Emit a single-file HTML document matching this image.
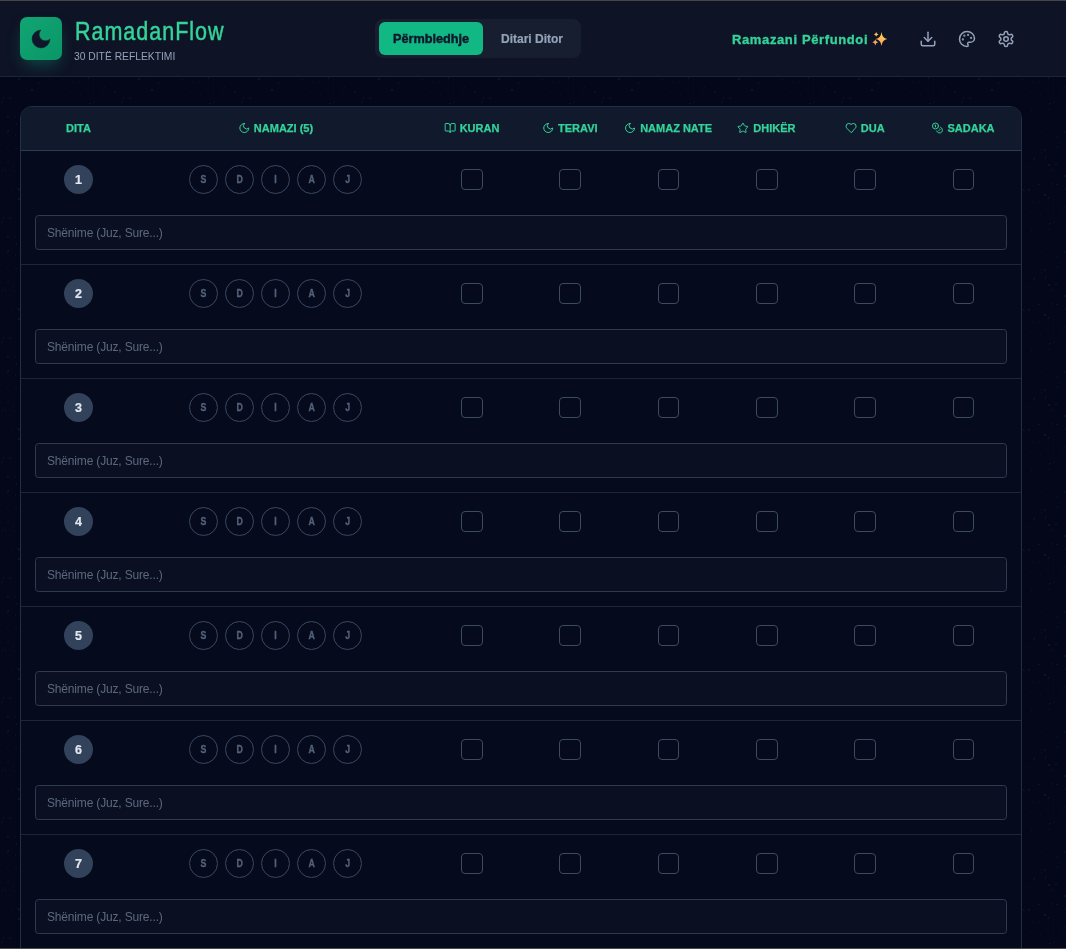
<!DOCTYPE html><html><head><meta charset="utf-8"><title>RamadanFlow</title><style>
*{box-sizing:border-box;margin:0;padding:0}
html,body{width:1066px;height:949px;overflow:hidden;background:#030719;font-family:"Liberation Sans",sans-serif}
#root{position:absolute;left:0;top:0;width:1066px;height:949px;will-change:transform}
.abs{position:absolute}
#topline{left:0;top:0;width:1066px;height:1px;background:#47454b}
#botline{left:0;top:948px;width:1066px;height:1px;background:#4d4c49}
#hdr{left:0;top:1px;width:1066px;height:76px;background:#0e1326;border-bottom:1px solid #1c2638}
#logo{left:20px;top:17px;width:42px;height:43px;border-radius:7px;background:linear-gradient(135deg,#11a572,#0a9667);box-shadow:0 8px 16px -4px rgba(16,185,129,.35);display:flex;align-items:center;justify-content:center}
#title{left:75px;top:16px;font-size:25px;letter-spacing:1.15px;transform:scaleX(.86);transform-origin:0 0;-webkit-text-stroke:.5px #34d399;color:#34d399;line-height:30px;white-space:nowrap}
#sub{left:74px;top:51px;font-size:10.3px;color:#94a3b8;line-height:12px;white-space:nowrap}
#tabs{left:375px;top:19px;width:206px;height:39px;border-radius:8px;background:#161e30}
#tab1{left:4px;top:3px;width:104px;height:33px;border-radius:6px;background:#12b884;color:#0f172a;font-weight:bold;font-size:12.7px;-webkit-text-stroke:.45px #0f172a;display:flex;align-items:center;justify-content:center}
#tab2{left:108px;top:3px;width:98px;height:33px;color:#94a3b8;font-weight:bold;font-size:12px;-webkit-text-stroke:.2px #94a3b8;display:flex;align-items:center;justify-content:center}
#done{left:732px;top:32px;-webkit-text-stroke:.35px #34d399;font-size:13px;font-weight:bold;letter-spacing:.62px;color:#34d399;white-space:nowrap;line-height:16px}
.ico{color:#94a3b8}
#card{left:20px;top:106px;width:1002px;height:900px;border:1px solid #232f42;border-radius:12px;background:#050a1d;overflow:hidden}
#thead{left:0;top:0;width:1000px;height:44px;background:#111a2d;border-bottom:1px solid #2e3c53}
.th{top:-1px;height:43px;-webkit-text-stroke:.25px #34d399;display:flex;align-items:center;justify-content:center;gap:4px;color:#34d399;font-weight:bold;font-size:11px;white-space:nowrap;transform:translateX(-50%)}
.row{left:0;width:1000px;height:114px;border-bottom:1px solid #1c2637}
.day{width:29px;height:29px;border-radius:50%;background:#32425a;color:#e2e8f0;font-weight:bold;font-size:12.5px;-webkit-text-stroke:.2px #e2e8f0;display:flex;align-items:center;justify-content:center}
.pr{width:29px;height:29px;border-radius:50%;border:1px solid #3b4a62;color:#53627a;font-weight:bold;font-size:10px;-webkit-text-stroke:.3px #53627a;display:flex;align-items:center;justify-content:center}
.pr i{font-style:normal;display:inline-block;transform:scaleX(.88)}
.cb{width:22px;height:21px;border-radius:4px;border:1.5px solid #3d4b61}
.note{left:14px;top:64px;width:972px;height:35px;border:1px solid #2d3a50;border-radius:3.5px;background:#0a1022;color:#5b687c;font-size:12px;letter-spacing:-.17px;padding-left:11px;display:flex;align-items:center}
</style></head><body><div id="root"><svg class="abs" style="left:0;top:0" width="1066" height="949"><defs><pattern id="st" width="120" height="120" patternUnits="userSpaceOnUse"><g fill="#121a30"><rect x="41" y="19" width="1" height="1" opacity="0.3"/><rect x="105" y="68" width="1" height="2" opacity="0.6"/><rect x="7" y="116" width="2" height="1" opacity="0.3"/><rect x="11" y="55" width="1" height="1" opacity="0.3"/><rect x="11" y="70" width="1" height="1" opacity="0.6"/><rect x="15" y="28" width="2" height="1" opacity="0.6"/><rect x="74" y="50" width="1" height="1" opacity="0.3"/><rect x="71" y="109" width="1" height="2" opacity="0.45"/><rect x="18" y="69" width="1" height="2" opacity="0.6"/><rect x="104" y="87" width="1" height="1" opacity="0.6"/><rect x="73" y="81" width="1" height="2" opacity="0.3"/><rect x="70" y="91" width="1" height="1" opacity="0.6"/><rect x="26" y="63" width="2" height="2" opacity="0.45"/><rect x="59" y="74" width="1" height="2" opacity="0.45"/><rect x="31" y="101" width="1" height="1" opacity="0.3"/><rect x="73" y="38" width="2" height="2" opacity="0.45"/><rect x="93" y="57" width="1" height="1" opacity="0.3"/><rect x="65" y="53" width="1" height="2" opacity="0.3"/><rect x="119" y="62" width="1" height="1" opacity="0.6"/><rect x="9" y="97" width="2" height="2" opacity="0.45"/><rect x="88" y="44" width="2" height="2" opacity="0.6"/><rect x="102" y="58" width="1" height="1" opacity="0.45"/><rect x="60" y="89" width="2" height="1" opacity="0.3"/><rect x="93" y="89" width="1" height="2" opacity="0.45"/><rect x="91" y="49" width="2" height="2" opacity="0.3"/><rect x="59" y="45" width="1" height="1" opacity="0.45"/><rect x="7" y="27" width="1" height="1" opacity="0.6"/><rect x="31" y="50" width="1" height="2" opacity="0.3"/><rect x="21" y="57" width="1" height="2" opacity="0.3"/><rect x="104" y="55" width="2" height="2" opacity="0.6"/><rect x="53" y="45" width="2" height="2" opacity="0.3"/><rect x="19" y="10" width="1" height="1" opacity="0.3"/><rect x="84" y="29" width="1" height="2" opacity="0.6"/><rect x="23" y="33" width="1" height="1" opacity="0.3"/><rect x="53" y="68" width="1" height="2" opacity="0.3"/><rect x="88" y="109" width="2" height="1" opacity="0.45"/><rect x="115" y="111" width="2" height="2" opacity="0.45"/><rect x="51" y="50" width="1" height="2" opacity="0.6"/><rect x="51" y="7" width="1" height="1" opacity="0.3"/><rect x="56" y="20" width="1" height="2" opacity="0.6"/><rect x="6" y="13" width="1" height="1" opacity="0.6"/><rect x="12" y="46" width="2" height="1" opacity="0.3"/><rect x="111" y="26" width="2" height="2" opacity="0.3"/><rect x="81" y="32" width="1" height="2" opacity="0.45"/><rect x="15" y="14" width="1" height="2" opacity="0.45"/><rect x="61" y="39" width="1" height="1" opacity="0.3"/><rect x="95" y="43" width="2" height="2" opacity="0.45"/><rect x="106" y="88" width="1" height="1" opacity="0.3"/><rect x="67" y="46" width="1" height="1" opacity="0.6"/><rect x="38" y="82" width="1" height="2" opacity="0.6"/><rect x="46" y="116" width="1" height="2" opacity="0.3"/><rect x="68" y="69" width="2" height="2" opacity="0.6"/><rect x="28" y="78" width="1" height="1" opacity="0.45"/><rect x="94" y="102" width="1" height="1" opacity="0.6"/><rect x="63" y="45" width="2" height="1" opacity="0.3"/><rect x="101" y="35" width="1" height="2" opacity="0.3"/><rect x="88" y="77" width="1" height="2" opacity="0.6"/><rect x="44" y="46" width="1" height="1" opacity="0.3"/><rect x="29" y="60" width="1" height="2" opacity="0.3"/><rect x="61" y="79" width="2" height="1" opacity="0.45"/><rect x="116" y="83" width="1" height="1" opacity="0.6"/><rect x="15" y="116" width="1" height="1" opacity="0.45"/><rect x="113" y="22" width="1" height="2" opacity="0.3"/><rect x="102" y="92" width="1" height="2" opacity="0.45"/><rect x="95" y="10" width="2" height="1" opacity="0.3"/><rect x="16" y="3" width="1" height="2" opacity="0.6"/><rect x="18" y="78" width="2" height="2" opacity="0.6"/><rect x="119" y="44" width="1" height="1" opacity="0.3"/><rect x="1" y="102" width="2" height="1" opacity="0.6"/><rect x="95" y="119" width="1" height="2" opacity="0.3"/><rect x="105" y="111" width="1" height="1" opacity="0.45"/><rect x="27" y="37" width="2" height="1" opacity="0.6"/><rect x="41" y="33" width="2" height="2" opacity="0.3"/><rect x="7" y="116" width="2" height="2" opacity="0.45"/><rect x="84" y="74" width="2" height="2" opacity="0.6"/><rect x="16" y="68" width="1" height="1" opacity="0.45"/><rect x="99" y="23" width="2" height="1" opacity="0.3"/><rect x="22" y="18" width="1" height="1" opacity="0.6"/><rect x="7" y="41" width="2" height="2" opacity="0.3"/><rect x="113" y="71" width="1" height="1" opacity="0.3"/><rect x="35" y="5" width="1" height="2" opacity="0.6"/><rect x="3" y="97" width="1" height="2" opacity="0.45"/><rect x="78" y="64" width="2" height="1" opacity="0.6"/><rect x="35" y="57" width="2" height="2" opacity="0.6"/><rect x="31" y="89" width="2" height="2" opacity="0.6"/><rect x="114" y="25" width="1" height="1" opacity="0.45"/><rect x="15" y="50" width="1" height="2" opacity="0.3"/><rect x="85" y="30" width="1" height="1" opacity="0.3"/><rect x="85" y="38" width="1" height="1" opacity="0.6"/><rect x="82" y="84" width="1" height="1" opacity="0.45"/><rect x="113" y="17" width="1" height="1" opacity="0.6"/><rect x="12" y="50" width="1" height="1" opacity="0.6"/><rect x="106" y="28" width="1" height="2" opacity="0.6"/><rect x="51" y="43" width="1" height="1" opacity="0.45"/><rect x="40" y="11" width="2" height="2" opacity="0.3"/><rect x="43" y="70" width="1" height="2" opacity="0.6"/><rect x="2" y="49" width="1" height="2" opacity="0.6"/><rect x="8" y="14" width="1" height="1" opacity="0.3"/><rect x="33" y="34" width="1" height="1" opacity="0.45"/><rect x="96" y="16" width="1" height="2" opacity="0.45"/><rect x="19" y="68" width="2" height="2" opacity="0.6"/><rect x="41" y="11" width="1" height="1" opacity="0.6"/><rect x="23" y="54" width="1" height="2" opacity="0.3"/><rect x="81" y="11" width="1" height="1" opacity="0.6"/><rect x="109" y="28" width="1" height="2" opacity="0.3"/><rect x="58" y="1" width="1" height="2" opacity="0.45"/><rect x="79" y="16" width="1" height="1" opacity="0.3"/><rect x="20" y="33" width="1" height="1" opacity="0.3"/><rect x="119" y="39" width="2" height="2" opacity="0.6"/><rect x="97" y="26" width="1" height="2" opacity="0.6"/><rect x="86" y="22" width="1" height="2" opacity="0.3"/><rect x="32" y="4" width="1" height="1" opacity="0.6"/><rect x="64" y="70" width="1" height="2" opacity="0.3"/><rect x="119" y="57" width="1" height="2" opacity="0.6"/><rect x="63" y="69" width="1" height="2" opacity="0.6"/><rect x="27" y="29" width="1" height="1" opacity="0.6"/><rect x="93" y="81" width="1" height="2" opacity="0.45"/><rect x="6" y="107" width="1" height="1" opacity="0.3"/><rect x="80" y="94" width="1" height="2" opacity="0.3"/><rect x="7" y="10" width="2" height="2" opacity="0.6"/><rect x="85" y="36" width="2" height="1" opacity="0.6"/><rect x="37" y="5" width="1" height="1" opacity="0.3"/><rect x="34" y="57" width="1" height="2" opacity="0.45"/><rect x="42" y="70" width="1" height="1" opacity="0.3"/><rect x="112" y="39" width="1" height="2" opacity="0.3"/><rect x="0" y="42" width="1" height="1" opacity="0.45"/><rect x="35" y="64" width="2" height="1" opacity="0.3"/><rect x="64" y="99" width="1" height="1" opacity="0.45"/><rect x="104" y="11" width="1" height="2" opacity="0.6"/><rect x="5" y="50" width="1" height="2" opacity="0.45"/><rect x="80" y="29" width="1" height="1" opacity="0.6"/><rect x="114" y="91" width="2" height="2" opacity="0.45"/><rect x="92" y="63" width="1" height="2" opacity="0.6"/><rect x="79" y="82" width="1" height="1" opacity="0.6"/><rect x="114" y="65" width="2" height="2" opacity="0.6"/><rect x="89" y="103" width="2" height="1" opacity="0.6"/><rect x="96" y="64" width="2" height="1" opacity="0.6"/><rect x="74" y="102" width="2" height="1" opacity="0.3"/><rect x="3" y="5" width="1" height="2" opacity="0.3"/><rect x="48" y="106" width="1" height="1" opacity="0.6"/></g></pattern></defs><rect width="1066" height="949" fill="url(#st)"/></svg>
<div id="topline" class="abs"></div>
<div id="hdr" class="abs"></div>
<div id="logo" class="abs"><svg width="24" height="24" viewBox="0 0 24 24"><path d="M12 3a6 6 0 0 0 9 9 9 9 0 1 1-9-9Z" fill="#0f172a" stroke="#0f172a" stroke-width=".4" stroke-linejoin="round"/></svg></div>
<div id="title" class="abs">RamadanFlow</div>
<div id="sub" class="abs">30 DITË REFLEKTIMI</div>
<div id="tabs" class="abs"><div id="tab1" class="abs">Përmbledhje</div><div id="tab2" class="abs">Ditari Ditor</div></div>
<div id="done" class="abs">Ramazani Përfundoi</div>
<svg class="abs" style="left:872px;top:30px" width="16" height="17" viewBox="0 0 16 17"><defs><linearGradient id="sg" gradientUnits="userSpaceOnUse" x1="10" y1="2" x2="4" y2="16"><stop offset="0" stop-color="#fdd855"/><stop offset="0.55" stop-color="#fbb455"/><stop offset="1" stop-color="#f88a6c"/></linearGradient></defs><path d="M9.50 2.00Q10.20 8.16 15.30 9.00Q10.20 9.84 9.50 16.00Q8.80 9.84 3.70 9.00Q8.80 8.16 9.50 2.00ZM4.20 2.00Q4.54 4.04 6.50 4.40Q4.54 4.76 4.20 6.80Q3.86 4.76 1.90 4.40Q3.86 4.04 4.20 2.00ZM3.30 9.20Q3.73 11.84 6.20 12.30Q3.73 12.77 3.30 15.40Q2.86 12.77 0.40 12.30Q2.86 11.84 3.30 9.20Z" fill="url(#sg)"/></svg>
<div class="abs ico" style="left:919px;top:30px;width:18px;height:18px"><svg width="18" height="18" viewBox="0 0 24 24" fill="none" stroke="currentColor" stroke-width="2" stroke-linecap="round" stroke-linejoin="round"><path d="M21 15v4a2 2 0 0 1-2 2H5a2 2 0 0 1-2-2v-4"/><polyline points="7 10 12 15 17 10"/><line x1="12" x2="12" y1="15" y2="3"/></svg></div>
<div class="abs ico" style="left:958px;top:30px;width:18px;height:18px"><svg width="18" height="18" viewBox="0 0 24 24" fill="none" stroke="currentColor" stroke-width="2" stroke-linecap="round" stroke-linejoin="round"><circle cx="13.5" cy="6.5" r=".5" fill="currentColor"/><circle cx="17.5" cy="10.5" r=".5" fill="currentColor"/><circle cx="8.5" cy="7.5" r=".5" fill="currentColor"/><circle cx="6.5" cy="12.5" r=".5" fill="currentColor"/><path d="M12 2C6.5 2 2 6.5 2 12s4.5 10 10 10c.926 0 1.648-.746 1.648-1.688 0-.437-.18-.835-.437-1.125-.29-.289-.438-.652-.438-1.125a1.64 1.64 0 0 1 1.668-1.668h1.996c3.051 0 5.555-2.503 5.555-5.554C21.965 6.012 17.461 2 12 2z"/></svg></div>
<div class="abs ico" style="left:997px;top:30px;width:18px;height:18px"><svg width="18" height="18" viewBox="0 0 24 24" fill="none" stroke="currentColor" stroke-width="2" stroke-linecap="round" stroke-linejoin="round"><path d="M12.22 2h-.44a2 2 0 0 0-2 2v.18a2 2 0 0 1-1 1.73l-.43.25a2 2 0 0 1-2 0l-.15-.08a2 2 0 0 0-2.73.73l-.22.38a2 2 0 0 0 .73 2.73l.15.1a2 2 0 0 1 1 1.72v.51a2 2 0 0 1-1 1.74l-.15.09a2 2 0 0 0-.73 2.73l.22.38a2 2 0 0 0 2.73.73l.15-.08a2 2 0 0 1 2 0l.43.25a2 2 0 0 1 1 1.73V20a2 2 0 0 0 2 2h.44a2 2 0 0 0 2-2v-.18a2 2 0 0 1 1-1.73l.43-.25a2 2 0 0 1 2 0l.15.08a2 2 0 0 0 2.73-.73l.22-.39a2 2 0 0 0-.73-2.73l-.15-.08a2 2 0 0 1-1-1.74v-.5a2 2 0 0 1 1-1.74l.15-.09a2 2 0 0 0 .73-2.73l-.22-.38a2 2 0 0 0-2.73-.73l-.15.08a2 2 0 0 1-2 0l-.43-.25a2 2 0 0 1-1-1.73V4a2 2 0 0 0-2-2z"/><circle cx="12" cy="12" r="3"/></svg></div>
<div id="card" class="abs"><div id="thead" class="abs"><div class="abs th" style="left:57.5px"><span>DITA</span></div><div class="abs th" style="left:254.5px"><svg width="12" height="12" viewBox="0 0 24 24" fill="none" stroke="#34d399" stroke-width="2" stroke-linecap="round" stroke-linejoin="round"><path d="M12 3a6 6 0 0 0 9 9 9 9 0 1 1-9-9Z"/></svg><span>NAMAZI (5)</span></div><div class="abs th" style="left:450.5px"><svg width="12" height="12" viewBox="0 0 24 24" fill="none" stroke="#34d399" stroke-width="2" stroke-linecap="round" stroke-linejoin="round"><path d="M12 7v14"/><path d="M3 18a1 1 0 0 1-1-1V4a1 1 0 0 1 1-1h5a4 4 0 0 1 4 4 4 4 0 0 1 4-4h5a1 1 0 0 1 1 1v13a1 1 0 0 1-1 1h-6a3 3 0 0 0-3 3 3 3 0 0 0-3-3z"/></svg><span>KURAN</span></div><div class="abs th" style="left:548.8px"><svg width="12" height="12" viewBox="0 0 24 24" fill="none" stroke="#34d399" stroke-width="2" stroke-linecap="round" stroke-linejoin="round"><path d="M12 3a6 6 0 0 0 9 9 9 9 0 1 1-9-9Z"/></svg><span>TERAVI</span></div><div class="abs th" style="left:647.1px"><svg width="12" height="12" viewBox="0 0 24 24" fill="none" stroke="#34d399" stroke-width="2" stroke-linecap="round" stroke-linejoin="round"><path d="M12 3a6 6 0 0 0 9 9 9 9 0 1 1-9-9Z"/></svg><span>NAMAZ NATE</span></div><div class="abs th" style="left:745.4px"><svg width="12" height="12" viewBox="0 0 24 24" fill="none" stroke="#34d399" stroke-width="2" stroke-linecap="round" stroke-linejoin="round"><path d="M11.525 2.295a.53.53 0 0 1 .95 0l2.31 4.679a2.123 2.123 0 0 0 1.595 1.16l5.166.756a.53.53 0 0 1 .294.904l-3.736 3.638a2.123 2.123 0 0 0-.611 1.878l.882 5.14a.53.53 0 0 1-.771.56l-4.618-2.428a2.122 2.122 0 0 0-1.973 0L6.396 21.01a.53.53 0 0 1-.77-.56l.881-5.139a2.122 2.122 0 0 0-.611-1.879L2.16 9.795a.53.53 0 0 1 .294-.906l5.165-.755a2.122 2.122 0 0 0 1.597-1.16z"/></svg><span>DHIKËR</span></div><div class="abs th" style="left:843.7px"><svg width="12" height="12" viewBox="0 0 24 24" fill="none" stroke="#34d399" stroke-width="2" stroke-linecap="round" stroke-linejoin="round"><path d="M19 14c1.49-1.46 3-3.21 3-5.5A5.5 5.5 0 0 0 16.5 3c-1.76 0-3 .5-4.5 2-1.5-1.5-2.74-2-4.5-2A5.5 5.5 0 0 0 2 8.5c0 2.3 1.5 4.05 3 5.5l7 7Z"/></svg><span>DUA</span></div><div class="abs th" style="left:942px"><svg width="12" height="12" viewBox="0 0 24 24" fill="none" stroke="#34d399" stroke-width="2" stroke-linecap="round" stroke-linejoin="round"><circle cx="8" cy="8" r="6"/><path d="M18.09 10.37A6 6 0 1 1 10.34 18"/><path d="M7 6h1v4"/><path d="m16.71 13.88.7.71-2.82 2.82"/></svg><span>SADAKA</span></div></div><div class="abs row" style="top:44px"><div class="abs day" style="left:43.0px;top:14.0px">1</div><div class="abs pr" style="left:168.0px;top:14.0px"><i>S</i></div><div class="abs pr" style="left:204.0px;top:14.0px"><i>D</i></div><div class="abs pr" style="left:240.0px;top:14.0px"><i>I</i></div><div class="abs pr" style="left:276.0px;top:14.0px"><i>A</i></div><div class="abs pr" style="left:312.0px;top:14.0px"><i>J</i></div><div class="abs cb" style="left:440px;top:18px;width:22px"></div><div class="abs cb" style="left:538px;top:18px;width:22px"></div><div class="abs cb" style="left:637px;top:18px;width:21px"></div><div class="abs cb" style="left:735px;top:18px;width:22px"></div><div class="abs cb" style="left:833px;top:18px;width:22px"></div><div class="abs cb" style="left:932px;top:18px;width:21px"></div><div class="abs note">Shënime (Juz, Sure...)</div></div><div class="abs row" style="top:158px"><div class="abs day" style="left:43.0px;top:14.0px">2</div><div class="abs pr" style="left:168.0px;top:14.0px"><i>S</i></div><div class="abs pr" style="left:204.0px;top:14.0px"><i>D</i></div><div class="abs pr" style="left:240.0px;top:14.0px"><i>I</i></div><div class="abs pr" style="left:276.0px;top:14.0px"><i>A</i></div><div class="abs pr" style="left:312.0px;top:14.0px"><i>J</i></div><div class="abs cb" style="left:440px;top:18px;width:22px"></div><div class="abs cb" style="left:538px;top:18px;width:22px"></div><div class="abs cb" style="left:637px;top:18px;width:21px"></div><div class="abs cb" style="left:735px;top:18px;width:22px"></div><div class="abs cb" style="left:833px;top:18px;width:22px"></div><div class="abs cb" style="left:932px;top:18px;width:21px"></div><div class="abs note">Shënime (Juz, Sure...)</div></div><div class="abs row" style="top:272px"><div class="abs day" style="left:43.0px;top:14.0px">3</div><div class="abs pr" style="left:168.0px;top:14.0px"><i>S</i></div><div class="abs pr" style="left:204.0px;top:14.0px"><i>D</i></div><div class="abs pr" style="left:240.0px;top:14.0px"><i>I</i></div><div class="abs pr" style="left:276.0px;top:14.0px"><i>A</i></div><div class="abs pr" style="left:312.0px;top:14.0px"><i>J</i></div><div class="abs cb" style="left:440px;top:18px;width:22px"></div><div class="abs cb" style="left:538px;top:18px;width:22px"></div><div class="abs cb" style="left:637px;top:18px;width:21px"></div><div class="abs cb" style="left:735px;top:18px;width:22px"></div><div class="abs cb" style="left:833px;top:18px;width:22px"></div><div class="abs cb" style="left:932px;top:18px;width:21px"></div><div class="abs note">Shënime (Juz, Sure...)</div></div><div class="abs row" style="top:386px"><div class="abs day" style="left:43.0px;top:14.0px">4</div><div class="abs pr" style="left:168.0px;top:14.0px"><i>S</i></div><div class="abs pr" style="left:204.0px;top:14.0px"><i>D</i></div><div class="abs pr" style="left:240.0px;top:14.0px"><i>I</i></div><div class="abs pr" style="left:276.0px;top:14.0px"><i>A</i></div><div class="abs pr" style="left:312.0px;top:14.0px"><i>J</i></div><div class="abs cb" style="left:440px;top:18px;width:22px"></div><div class="abs cb" style="left:538px;top:18px;width:22px"></div><div class="abs cb" style="left:637px;top:18px;width:21px"></div><div class="abs cb" style="left:735px;top:18px;width:22px"></div><div class="abs cb" style="left:833px;top:18px;width:22px"></div><div class="abs cb" style="left:932px;top:18px;width:21px"></div><div class="abs note">Shënime (Juz, Sure...)</div></div><div class="abs row" style="top:500px"><div class="abs day" style="left:43.0px;top:14.0px">5</div><div class="abs pr" style="left:168.0px;top:14.0px"><i>S</i></div><div class="abs pr" style="left:204.0px;top:14.0px"><i>D</i></div><div class="abs pr" style="left:240.0px;top:14.0px"><i>I</i></div><div class="abs pr" style="left:276.0px;top:14.0px"><i>A</i></div><div class="abs pr" style="left:312.0px;top:14.0px"><i>J</i></div><div class="abs cb" style="left:440px;top:18px;width:22px"></div><div class="abs cb" style="left:538px;top:18px;width:22px"></div><div class="abs cb" style="left:637px;top:18px;width:21px"></div><div class="abs cb" style="left:735px;top:18px;width:22px"></div><div class="abs cb" style="left:833px;top:18px;width:22px"></div><div class="abs cb" style="left:932px;top:18px;width:21px"></div><div class="abs note">Shënime (Juz, Sure...)</div></div><div class="abs row" style="top:614px"><div class="abs day" style="left:43.0px;top:14.0px">6</div><div class="abs pr" style="left:168.0px;top:14.0px"><i>S</i></div><div class="abs pr" style="left:204.0px;top:14.0px"><i>D</i></div><div class="abs pr" style="left:240.0px;top:14.0px"><i>I</i></div><div class="abs pr" style="left:276.0px;top:14.0px"><i>A</i></div><div class="abs pr" style="left:312.0px;top:14.0px"><i>J</i></div><div class="abs cb" style="left:440px;top:18px;width:22px"></div><div class="abs cb" style="left:538px;top:18px;width:22px"></div><div class="abs cb" style="left:637px;top:18px;width:21px"></div><div class="abs cb" style="left:735px;top:18px;width:22px"></div><div class="abs cb" style="left:833px;top:18px;width:22px"></div><div class="abs cb" style="left:932px;top:18px;width:21px"></div><div class="abs note">Shënime (Juz, Sure...)</div></div><div class="abs row" style="top:728px"><div class="abs day" style="left:43.0px;top:14.0px">7</div><div class="abs pr" style="left:168.0px;top:14.0px"><i>S</i></div><div class="abs pr" style="left:204.0px;top:14.0px"><i>D</i></div><div class="abs pr" style="left:240.0px;top:14.0px"><i>I</i></div><div class="abs pr" style="left:276.0px;top:14.0px"><i>A</i></div><div class="abs pr" style="left:312.0px;top:14.0px"><i>J</i></div><div class="abs cb" style="left:440px;top:18px;width:22px"></div><div class="abs cb" style="left:538px;top:18px;width:22px"></div><div class="abs cb" style="left:637px;top:18px;width:21px"></div><div class="abs cb" style="left:735px;top:18px;width:22px"></div><div class="abs cb" style="left:833px;top:18px;width:22px"></div><div class="abs cb" style="left:932px;top:18px;width:21px"></div><div class="abs note">Shënime (Juz, Sure...)</div></div></div>
<div id="botline" class="abs"></div></div></body></html>
